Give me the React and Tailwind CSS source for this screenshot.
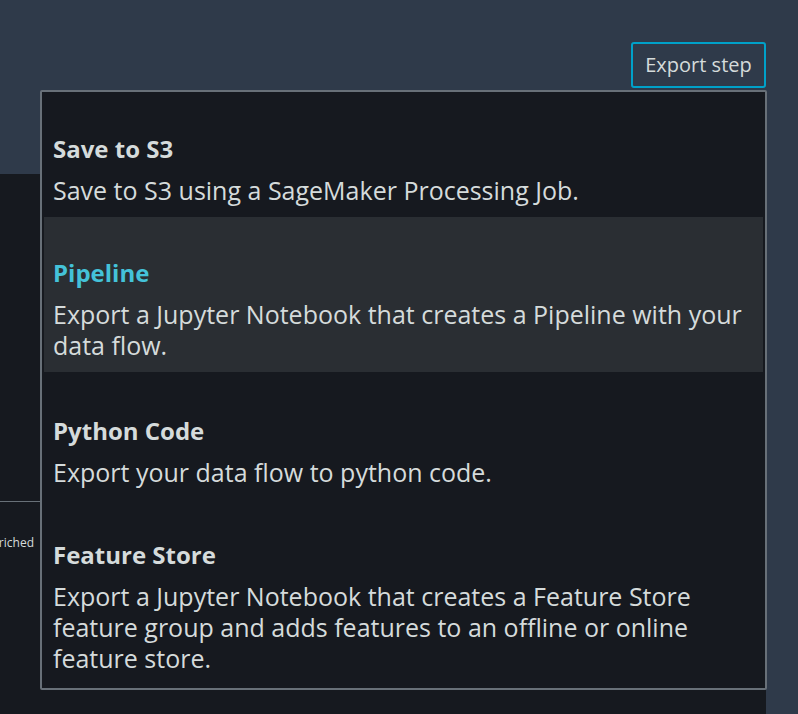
import React from "react";

const items = [
  { title: "Save to S3", desc: "Save to S3 using a SageMaker Processing Job." },
  { title: "Pipeline", desc: "Export a Jupyter Notebook that creates a Pipeline with your data flow.", active: true },
  { title: "Python Code", desc: "Export your data flow to python code." },
  { title: "Feature Store", desc: "Export a Jupyter Notebook that creates a Feature Store feature group and adds features to an offline or online feature store." },
];

export default function App() {
  return (
    <div
      className="relative w-[798px] h-[714px] overflow-hidden bg-[#2f3a4a] flex flex-col"
      style={{ fontFamily: '"Open Sans", "Noto Sans", sans-serif' }}
    >
      <div className="h-[174px] shrink-0 flex justify-end items-start pt-[42px] pr-[32px]">
        <button className="h-[46px] w-[135px] rounded-[3px] border-2 border-[#00a1c9] text-[20px] text-[#d5dbdb] flex items-center justify-center">
          Export step
        </button>
      </div>
      <div className="flex-1 flex">
        <div className="w-[766px] bg-[#16191f] flex flex-col">
          <div className="h-[327px]" />
          <div className="w-[40px] h-px bg-[#687078]" />
          <div className="mt-[32px] w-[34px] overflow-hidden flex justify-end">
            <span className="whitespace-nowrap text-[12px] leading-[18px] text-[#d5dbdb]">Enriched</span>
          </div>
        </div>
      </div>

      <div className="absolute left-[40px] top-[90px] w-[727px] h-[600px] border-2 border-[#687078] rounded-[2px] bg-[#16191f] px-[2px] pt-[1px]">
        {items.map((it) => (
          <div
            key={it.title}
            className={`pl-[9px] pr-[15px] pt-[40px] pb-[11px] ${it.active ? "bg-[#2a2e33] mb-[3px]" : ""}`}
          >
            <div
              className={`text-[24px] leading-[32px] font-bold ${it.active ? "text-[#44c2d9]" : "text-[#d5dbdb]"}`}
            >
              {it.title}
            </div>
            <div className="mt-[10px] text-[25px] leading-[31px] text-[#d5dbdb]">{it.desc}</div>
          </div>
        ))}
      </div>
    </div>
  );
}
